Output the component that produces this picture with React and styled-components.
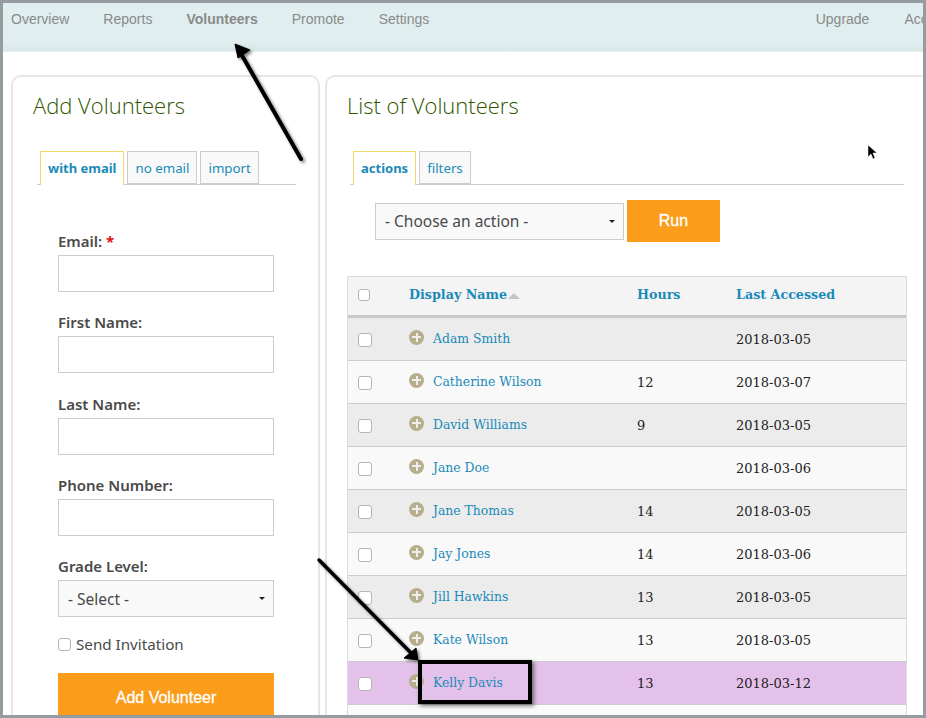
import React from 'react';
import styled, {createGlobalStyle} from 'styled-components';

const Global = createGlobalStyle`
    html, body { margin:0; padding:0; background:#fff; overflow:hidden; }
    * { box-sizing:border-box; }
`

const Frame = styled.div`
    position:relative; width:926px; height:718px; overflow:hidden;
    border:3px solid #949c9f; background:#fff;
    font-family:"Noto Sans", sans-serif;
`

const Nav = styled.div`
    height:49px; display:flex; padding:8px 0 0 8px;
    background:linear-gradient(#e0eeef 80%, #d9e7e9);
    border-bottom:1px solid #e6eef0;
    font-family:"Liberation Sans", sans-serif; font-size:14px; color:#8a8a8a;
`

const NavItem = styled.div`
    margin-right:${props => props.gap}px;
    font-weight:${props => props.active ? 700 : 400};
    line-height:17px; white-space:nowrap;
    ${props => props.push && 'margin-left:auto;'}
`

const Content = styled.div`
    display:flex; gap:5px; padding:23px 0 0 8px;
`

const Panel = styled.div`
    flex:none; width:${props => props.width}px; height:700px;
    padding:14px 22px 0 20px;
    border:2px solid #e6e6e6; border-radius:10px 10px 0 0;
`

const Heading = styled.h2`
    margin:0 0 32px; font-family:"Open Sans", sans-serif; font-weight:300;
    font-size:22px; line-height:28px; color:#2f5600;
`

const Tabs = styled.div`
    display:flex; gap:3px; height:34px; padding-left:3px;
    margin-left:${props => props.offset}px;
    border-bottom:1px solid #ccc;
    width:${props => props.width}px;
`

const Tab = styled.div`
    height:${props => props.active ? 34 : 33}px; padding:0 7px; line-height:33px;
    font-size:${props => props.active ? 13 : 13.3}px; color:#1a8ab8; white-space:nowrap;
    font-weight:${props => props.active ? 700 : 400};
    background:${props => props.active ? '#fff' : '#f9f9f9'};
    border:1px solid ${props => props.active ? '#f2d66e' : '#ccc'};
    border-bottom:${props => props.active ? '0' : '1px solid #ccc'};
`

const Form = styled.div`
    padding:46px 0 0 25px; width:241px;
`

const Label = styled.div`
    font-size:15px; line-height:20px; font-weight:600; color:#4a4a4a; margin-bottom:4px;
`

const Required = styled.span`
    color:#e01010; font-weight:700;
`

const Input = styled.div`
    width:216px; height:37px; margin-bottom:20.25px;
    border:1px solid #ccc; background:#fff;
`

const SelectBox = styled.div`
    display:flex; align-items:center; justify-content:space-between;
    width:${props => props.width}px; height:37px; padding:0 9px;
    border:1px solid #ccc; background:#f9f9f9;
    font-size:15.5px; color:#4a4a4a;
`

const Caret = styled.span`
    width:0; height:0; margin-right:-1px;
    border-left:3px solid transparent; border-right:3px solid transparent;
    border-top:3px solid #222;
`

const CheckRow = styled.div`
    display:flex; align-items:center; gap:5px; height:20px; margin:17px 0 19px;
    font-size:15.2px; color:#4a4a4a;
`

const Box = styled.span`
    flex:none; display:block; width:${props => props.size || 13}px; height:${props => props.size || 13}px;
    border:1px solid #b5b5b5; border-radius:3px; background:#fff;
`

const OrangeButton = styled.div`
    display:flex; align-items:center; justify-content:center;
    width:${props => props.width}px; height:${props => props.height}px;
    background:#fb9d1a; color:#fff; font-family:"Liberation Sans", sans-serif;
    font-size:16px; font-weight:400; -webkit-text-stroke:0.3px #fff;
`

const ActionRow = styled.div`
    display:flex; align-items:center; gap:3px; margin:15px 0 34px 28px;
`

const Table = styled.div`
    width:560px; font-family:"DejaVu Serif", serif; font-size:13px;
    border-left:1px solid #ddd; border-right:1px solid #ddd;
`

const Row = styled.div`
    display:grid; grid-template-columns:61px 228px 99px 1fr; align-items:center;
    height:43px; background:${props => props.bg}; border-bottom:1px solid #ccc;
    color:#222;
`

const HeadRow = styled(Row)`
    height:42px; padding-bottom:4px; background:#f4f4f4;
    border-top:1px solid #ddd; border-bottom:3px solid #c8c8c8;
    font-weight:700; font-size:12.7px; color:#1a8ab8;
`

const CheckCell = styled.div`
    padding:1px 0 0 10px;
`

const NameCell = styled.div`
    display:flex; align-items:center; gap:9px; margin-top:-2px; white-space:nowrap;
    font-size:12.4px; color:#1a8ab8;
`

const Plus = styled.span`
    flex:none; position:relative; top:-1px; width:15px; height:15px; border-radius:50%; background:#b8ae8c;
    &::before { content:""; position:absolute; left:3px; top:6.5px; width:9px; height:2px; background:#eee; }
    &::after { content:""; position:absolute; left:6.5px; top:3px; width:2px; height:9px; background:#eee; }
`

const SortArrow = styled.span`
    display:inline-block; width:0; height:0; margin-left:1px;
    border-left:6px solid transparent; border-right:6px solid transparent;
    border-bottom:6px solid #c4c4c4;
`

const Highlight = styled.div`
    position:absolute; left:415px; top:657px; width:114px; height:44px;
    border:4px solid #000; box-shadow:2px 2px 4px rgba(0,0,0,.5);
`

const Overlay = styled.svg`
    position:absolute; left:-3px; top:-3px; width:926px; height:718px; pointer-events:none;
`

const volunteers = [
    {name:'Adam Smith', hours:'', date:'2018-03-05', bg:'#ececec'},
    {name:'Catherine Wilson', hours:'12', date:'2018-03-07', bg:'#f9f9f9'},
    {name:'David Williams', hours:'9', date:'2018-03-05', bg:'#ececec'},
    {name:'Jane Doe', hours:'', date:'2018-03-06', bg:'#f9f9f9'},
    {name:'Jane Thomas', hours:'14', date:'2018-03-05', bg:'#ececec'},
    {name:'Jay Jones', hours:'14', date:'2018-03-06', bg:'#f9f9f9'},
    {name:'Jill Hawkins', hours:'13', date:'2018-03-05', bg:'#ececec'},
    {name:'Kate Wilson', hours:'13', date:'2018-03-05', bg:'#f9f9f9'},
    {name:'Kelly Davis', hours:'13', date:'2018-03-12', bg:'#e4c1ea'},
];

const fields = ['First Name:', 'Last Name:', 'Phone Number:'];

export default function App() {
    return (
        <Frame>
            <Global />
            <Nav>
                <NavItem gap={34}>Overview</NavItem>
                <NavItem gap={34}>Reports</NavItem>
                <NavItem gap={34} active>Volunteers</NavItem>
                <NavItem gap={34}>Promote</NavItem>
                <NavItem gap={34}>Settings</NavItem>
                <NavItem gap={35} push>Upgrade</NavItem>
                <NavItem gap={-32}>Account</NavItem>
            </Nav>
            <Content>
                <Panel width={309}>
                    <Heading>Add Volunteers</Heading>
                    <Tabs width={259} offset={4}>
                        <Tab active>with email</Tab>
                        <Tab>no email</Tab>
                        <Tab>import</Tab>
                    </Tabs>
                    <Form>
                        <Label>Email: <Required>*</Required></Label>
                        <Input />
                        {fields.map((item) => {
                            return (
                                <div key={item}>
                                    <Label>{item}</Label>
                                    <Input />
                                </div>
                            )
                        })}
                        <Label>Grade Level:</Label>
                        <SelectBox width={216}>- Select -<Caret /></SelectBox>
                        <CheckRow><Box />Send Invitation</CheckRow>
                        <OrangeButton width={216} height={50}>Add Volunteer</OrangeButton>
                    </Form>
                </Panel>
                <Panel width={640}>
                    <Heading>List of Volunteers</Heading>
                    <Tabs width={554} offset={3}>
                        <Tab active>actions</Tab>
                        <Tab>filters</Tab>
                    </Tabs>
                    <ActionRow>
                        <SelectBox width={249}>- Choose an action -<Caret /></SelectBox>
                        <OrangeButton width={93} height={42}>Run</OrangeButton>
                    </ActionRow>
                    <Table>
                        <HeadRow>
                            <CheckCell><Box size={12} /></CheckCell>
                            <div>Display Name<SortArrow /></div>
                            <div>Hours</div>
                            <div>Last Accessed</div>
                        </HeadRow>
                        {volunteers.map((item) => {
                            return (
                                <Row key={item.name} bg={item.bg}>
                                    <CheckCell><Box size={14} /></CheckCell>
                                    <NameCell><Plus />{item.name}</NameCell>
                                    <div>{item.hours}</div>
                                    <div>{item.date}</div>
                                </Row>
                            )
                        })}
                        <Row bg="#fafafa" />
                    </Table>
                </Panel>
            </Content>
            <Highlight />
            <Overlay viewBox="0 0 926 718">
                <defs>
                    <filter id="arrowShadow" x="-30%" y="-30%" width="160%" height="160%">
                        <feDropShadow dx="2" dy="2" stdDeviation="1.5" floodColor="#000" floodOpacity="0.5" />
                    </filter>
                </defs>
                <g filter="url(#arrowShadow)" fill="#000" stroke="#000">
                    <line x1="301" y1="159" x2="240" y2="52" strokeWidth="4" strokeLinecap="round" />
                    <path d="M235 44 L250 50 L238 58 Z" />
                    <line x1="319" y1="560" x2="413" y2="655" strokeWidth="3.5" strokeLinecap="round" />
                    <path d="M418 660 L404 658 L416 648 Z" />
                </g>
                <path d="M868 145 L868 157 L871 154 L873 159 L875 158 L873 153 L877 153 Z" fill="#000" stroke="#fff" strokeWidth="0.5" />
            </Overlay>
        </Frame>
    );
}
